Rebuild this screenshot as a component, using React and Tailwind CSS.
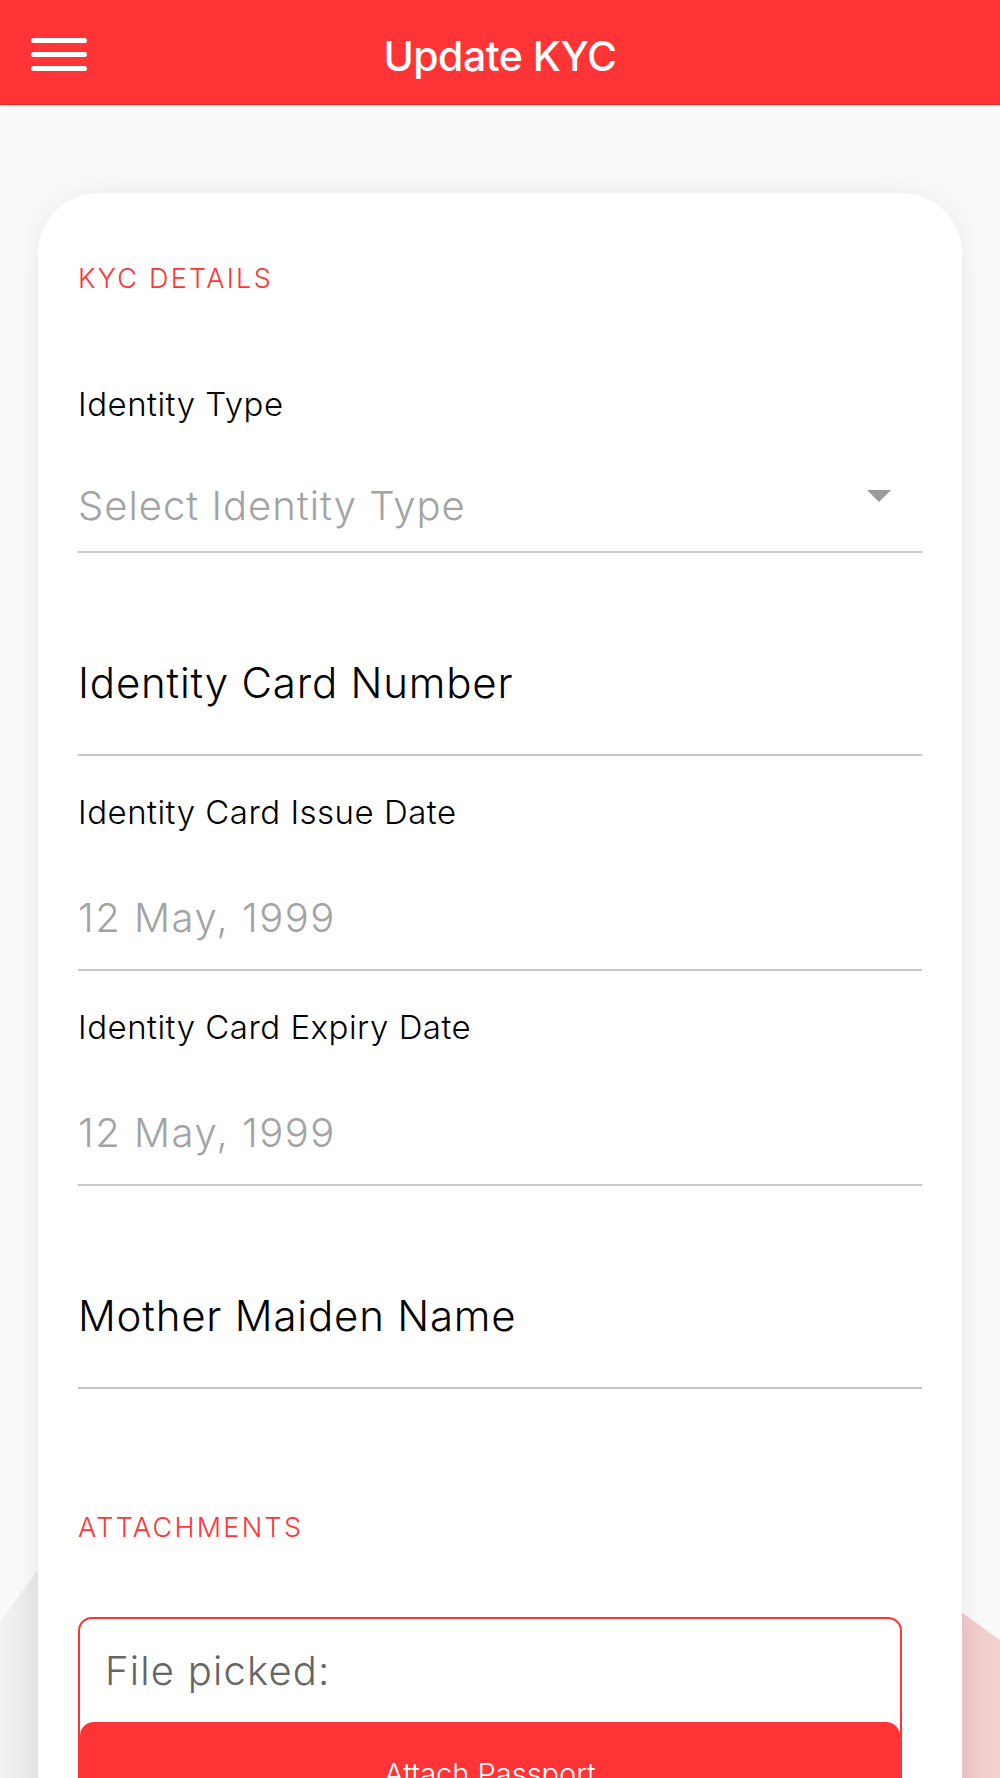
import React from "react";

const font = { fontFamily: 'Inter, "Noto Sans", "Liberation Sans", sans-serif' };

function Field({ label, value, big }) {
  return (
    <div className="flex flex-col">
      {label && (
        <div className="mt-[40px] text-[33px] leading-[33px] font-light tracking-[0.5px] text-black">
          {label}
        </div>
      )}
      {big ? (
        <div className="mt-[109px] pb-[50px] border-b-2 border-[#c8c7cc] text-[42px] leading-[42px] font-light tracking-[0.8px] text-black">
          {big}
        </div>
      ) : (
        <div className="mt-[69px] pb-[31px] border-b-2 border-[#c8c7cc] text-[40px] leading-[40px] font-light tracking-[1.5px] text-[#a3a3a3]">
          {value}
        </div>
      )}
    </div>
  );
}

export default function App() {
  return (
    <div
      className="relative h-[1778px] w-full overflow-hidden bg-[#fafafa]"
      style={font}
    >
      {/* background shapes behind the card */}
      <svg
        className="absolute left-0 top-0"
        width="1000"
        height="1778"
        viewBox="0 0 1000 1778"
      >
        <defs>
          <linearGradient id="gl" x1="0" x2="1" y1="0" y2="0">
            <stop offset="0" stopColor="#f2f2f2" />
            <stop offset="1" stopColor="#e4e4e4" />
          </linearGradient>
          <linearGradient id="pk" x1="0" x2="1" y1="0" y2="0">
            <stop offset="0" stopColor="#efc6c6" />
            <stop offset="1" stopColor="#f4d2d2" />
          </linearGradient>
        </defs>
        <polygon points="0,1622 36,1572 60,1572 60,1778 0,1778" fill="url(#gl)" />
        <polygon points="950,1604 1000,1640 1000,1778 950,1778" fill="url(#pk)" />
      </svg>

      <header className="relative z-10 grid h-[105px] grid-cols-[1fr_auto_1fr] items-center border-b border-[#d92d30] bg-[#ff3437] shadow-[0_1px_2px_rgba(0,0,0,0.15)]">
        <div className="ml-[31px] mt-[4px] flex flex-col gap-[9px]">
          <span className="block h-[5px] w-[56px] rounded-full bg-white" />
          <span className="block h-[5px] w-[56px] rounded-full bg-white" />
          <span className="block h-[5px] w-[56px] rounded-full bg-white" />
        </div>
        <h1 className="mt-[8px] text-[41px] leading-[41px] font-medium tracking-[-0.5px] text-white">
          Update KYC
        </h1>
        <div />
      </header>

      <main className="relative z-10 mx-[38px] mt-[88px] rounded-[60px] bg-white px-[40px] pt-[72px] pb-[200px] shadow-[0_0_30px_rgba(0,0,0,0.07)]">
        <div className="text-[27px] leading-[27px] font-light tracking-[2.3px] text-[#ff3437]">
          KYC DETAILS
        </div>

        <div className="mt-[96px] text-[33px] leading-[33px] font-light tracking-[0.5px] text-black">
          Identity Type
        </div>
        <div className="mt-[65px] flex items-start justify-between border-b-2 border-[#c8c7cc] pb-[25px]">
          <span className="text-[40px] leading-[40px] font-light tracking-[1px] text-[#a3a3a3]">
            Select Identity Type
          </span>
          <svg className="mr-[31px] mt-[4px]" width="24" height="12" viewBox="0 0 24 12">
            <polygon points="0,0 24,0 12,12" fill="#9b9b9b" />
          </svg>
        </div>

        <Field big="Identity Card Number" />
        <Field label="Identity Card Issue Date" value="12 May, 1999" />
        <Field label="Identity Card Expiry Date" value="12 May, 1999" />
        <Field big="Mother Maiden Name" />

        <div className="mt-[125px] text-[27px] leading-[27px] font-light tracking-[2.3px] text-[#ff3437]">
          ATTACHMENTS
        </div>

        <div className="mt-[76px] mr-[20px] overflow-hidden rounded-[14px] border-2 border-[#ff3437]">
          <div className="pl-[25px] pt-[32px] text-[40px] leading-[40px] font-light tracking-[1.2px] text-[#666666]">
            File picked:
          </div>
          <button className="mt-[31px] w-full rounded-t-[14px] bg-[#ff3437] pt-[37px] pb-[37px] text-[29px] leading-[29px] font-light text-white">
            Attach Passport
          </button>
        </div>
      </main>
    </div>
  );
}
